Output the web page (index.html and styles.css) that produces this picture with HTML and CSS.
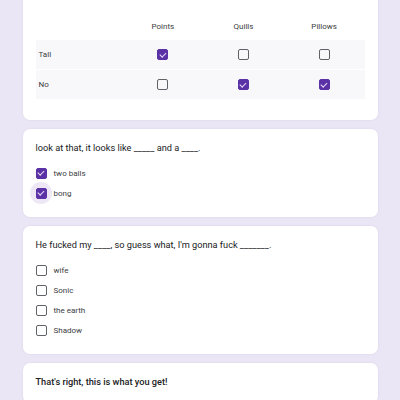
FILE: index.html
```html
<!DOCTYPE html>
<html lang="en">
<head>
    <meta charset="UTF-8">
    <meta name="viewport" content="width=device-width, initial-scale=1.0">
    <title>Quiz</title>
    <link rel="stylesheet" href="styles.css">
</head>
<body>
    <div class="form">
        <div class="card card-grid">
            <p class="question">Is it big, or spiky?</p>
            <div class="grid">
                <div class="grid-head">
                    <span></span>
                    <span>Points</span>
                    <span>Quills</span>
                    <span>Pillows</span>
                </div>
                <div class="grid-row">
                    <span class="row-label">Tall</span>
                    <span class="cell"><span class="box checked"></span></span>
                    <span class="cell"><span class="box"></span></span>
                    <span class="cell"><span class="box"></span></span>
                </div>
                <div class="grid-row">
                    <span class="row-label">No</span>
                    <span class="cell"><span class="box"></span></span>
                    <span class="cell"><span class="box checked"></span></span>
                    <span class="cell"><span class="box checked"></span></span>
                </div>
            </div>
        </div>

        <div class="card">
            <p class="question">look at that, it looks like _____ and a ____.</p>
            <div class="options">
                <label class="option"><span class="box checked"></span>two balls</label>
                <label class="option"><span class="box checked focused"></span>bong</label>
            </div>
        </div>

        <div class="card">
            <p class="question">He fucked my ____, so guess what, I'm gonna fuck _______.</p>
            <div class="options">
                <label class="option"><span class="box"></span>wife</label>
                <label class="option"><span class="box"></span>Sonic</label>
                <label class="option"><span class="box"></span>the earth</label>
                <label class="option"><span class="box"></span>Shadow</label>
            </div>
        </div>

        <div class="card">
            <p class="question title">That's right, this is what you get!</p>
        </div>
    </div>
</body>
</html>
```

FILE: styles.css
```css
body {
    margin: 0;
    background-color: #ebe6f5;
    font-family: Roboto, 'Liberation Sans', sans-serif;
    color: #202124;
    overflow: hidden;
}
.form {
    width: 355px;
    margin: -18px auto 0;
    display: flex;
    flex-direction: column;
    gap: 9px;
}
.card {
    background-color: #fff;
    border-radius: 7px;
    padding: 12px 13px 14px;
    box-shadow: 0 0 2px rgba(120, 100, 160, 0.15);
}
.question {
    margin: 0;
    font-size: 9.2px;
    line-height: 14px;
}
.title {
    font-weight: 500;
}

/* checkbox grid */
.card-grid {
    padding: 6px 13px 20px;
}
.card-grid .question {
    margin-bottom: 18px;
}
.grid-head,
.grid-row {
    display: grid;
    grid-template-columns: 87px repeat(3, 1fr);
    align-items: center;
    font-size: 8px;
    color: #3c4043;
}
.grid-head {
    height: 12px;
    margin-bottom: 8px;
    text-align: center;
}
.grid-row {
    height: 29px;
    background-color: #f8f7fa;
    margin-bottom: 1px;
}
.row-label {
    padding-left: 3px;
}
.cell {
    display: flex;
    justify-content: center;
}

/* options list */
.options {
    margin-top: 8px;
    display: flex;
    flex-direction: column;
}
.option {
    display: flex;
    align-items: center;
    gap: 7px;
    height: 20px;
    font-size: 8px;
    color: #3c4043;
}

.box {
    position: relative;
    box-sizing: border-box;
    width: 11px;
    height: 11px;
    border: 1.5px solid #5f6368;
    border-radius: 2px;
    flex-shrink: 0;
}
.box.checked {
    background-color: #5a32a6;
    border-color: #5a32a6;
}
.box.checked::after {
    content: '';
    position: absolute;
    left: 2.5px;
    top: 0.5px;
    width: 2.5px;
    height: 5px;
    border: solid #e8def8;
    border-width: 0 1.5px 1.5px 0;
    transform: rotate(45deg);
}
.box.focused::before {
    content: '';
    position: absolute;
    left: -7px;
    top: -7px;
    width: 22px;
    height: 22px;
    border-radius: 50%;
    background-color: rgba(103, 58, 183, 0.12);
}
```
